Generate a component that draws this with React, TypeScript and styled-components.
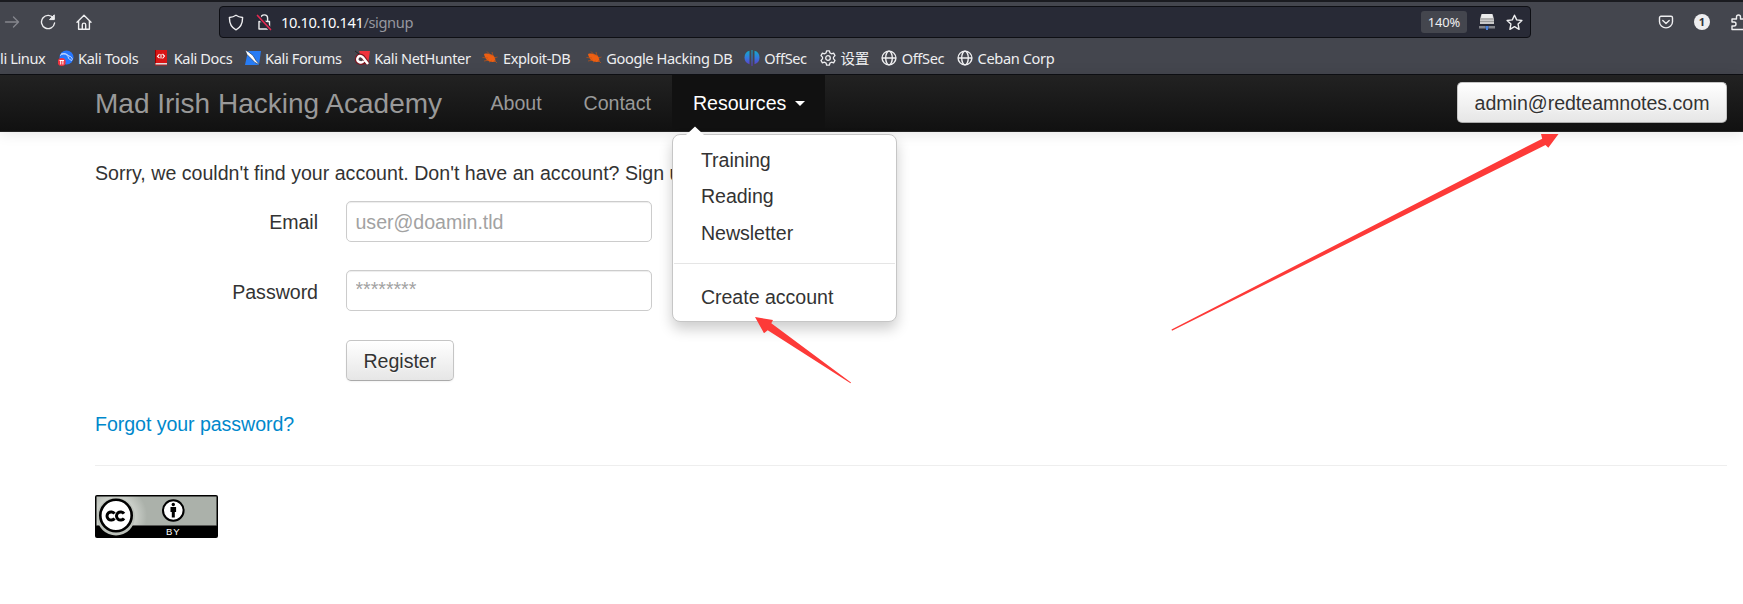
import React from 'react';
import styled, { createGlobalStyle } from 'styled-components';

const Global = createGlobalStyle`
  * { box-sizing: border-box; }
  body { margin: 0; background: #fff; overflow: hidden; font-family: "Liberation Sans", Arial, sans-serif; font-size: 19.6px; line-height: 28px; letter-spacing: -0.03px; color: #333; }
  a { text-decoration: none; color: inherit; }
  svg { display: block; flex: none; }
`;

const Window = styled.div`position: relative; width: 1743px; height: 604px; overflow: hidden;`;

const Chrome = styled.header`
  height: 75px; background: #44464e; border-top: 2px solid #1a1b20; border-bottom: 1px solid #0e0f13;
  font-family: "Noto Sans", "Noto Sans CJK SC", sans-serif; color: #eeeef0;
`;
const Toolbar = styled.div`display: flex; align-items: center; height: 40px; padding-left: 4px;`;
const NavIcons = styled.div`display: flex; flex: none; align-items: center; gap: 20px; width: 215px;`;
const UrlBar = styled.div`
  display: flex; flex: none; align-items: center; width: 1312px; height: 32px; padding: 0 7px 0 8px;
  background: #282a36; border: 1px solid #0e0f14; border-radius: 4px; font-size: 14.67px; letter-spacing: -0.4px;
`;
const UrlText = styled.span`flex: 1; margin-left: 9px; color: #fbfbfe; line-height: 20px; span { color: #96979f; }`;
const Zoom = styled.span`
  display: flex; align-items: center; justify-content: center; width: 46px; height: 22px; margin-right: 12px;
  background: #44464e; border-radius: 3px; font-size: 12.9px; letter-spacing: -0.1px;
`;
const ToolIcons = styled.div`display: flex; flex: none; align-items: center; gap: 20px; margin-left: 127px;`;
const Account = styled.span`
  display: flex; align-items: center; justify-content: center; width: 16px; height: 16px; border-radius: 50%;
  background: #eeeef0; color: #33353c; font-size: 11px; font-weight: 700; line-height: 16px;
`;
const Bookmarks = styled.nav`display: flex; align-items: center; height: 32px; gap: 12.6px; font-size: 14.6px; line-height: 20px; letter-spacing: -0.38px; white-space: nowrap;`;
const Bookmark = styled.a<{ $w: number }>`display: flex; flex: none; align-items: center; gap: 4.5px; width: ${p => p.$w}px; height: 20px;`;

const Navbar = styled.nav`
  display: flex; height: 57px; padding: 0 16px 0 95px; color: #999;
  background: linear-gradient(#222, #111); border-bottom: 1px solid #252525; box-shadow: 0 1px 14px rgba(0,0,0,.1);
`;
const Brand = styled.a`width: 374.5px; font-size: 28px; line-height: 57px; letter-spacing: 0; white-space: nowrap;`;
const NavItem = styled.div<{ $active?: boolean }>`
  position: relative; display: flex; align-items: center; padding: 0 21px; height: 56px;
  color: ${p => (p.$active ? '#fff' : '#999')}; background: ${p => (p.$active ? '#111' : 'transparent')};
`;
const Caret = styled.span`margin: 0 -1px 0 9px; border: 5.5px solid transparent; border-top-color: #fff; border-bottom: 0;`;
const Button = styled.button`
  height: 41px; padding: 0 16.5px; border: 1px solid #c5c5c5; border-bottom-color: #aaa; border-radius: 5px;
  font: inherit; letter-spacing: inherit; color: #333; text-shadow: 0 1px 1px rgba(255,255,255,.75);
  background: linear-gradient(#fff, #e6e6e6); box-shadow: inset 0 1px 0 rgba(255,255,255,.2), 0 1px 2px rgba(0,0,0,.05);
`;
const UserButton = styled(Button)`margin: 7px 0 0 auto; width: 270px;`;

const Dropdown = styled.div`
  position: absolute; z-index: 2; left: 0; top: 59px; width: 225px; height: 188px; padding: 7px 0;
  background: #fff; color: #333; border: 1px solid #c6c6c6; border-radius: 8px; box-shadow: 0 7px 14px rgba(0,0,0,.2);
`;
const Pointer = styled.svg`position: absolute; left: 13px; top: -9px;`;
const MenuItem = styled.a<{ $h?: number }>`display: block; height: ${p => p.$h ?? 36}px; padding: 4px 28px; line-height: 28px; white-space: nowrap;`;
const Divider = styled.div`height: 1px; margin: 12px 1px 15px; background: #e5e5e5;`;

const Content = styled.main`padding: 27px 16px 0 95px;`;
const Message = styled.p`margin: 0 0 14px; width: 720px; letter-spacing: 0; white-space: nowrap;`;
const Form = styled.form`display: flex; flex-direction: column; gap: 28px; margin-bottom: 29px;`;
const Row = styled.div<{ $h?: number }>`display: flex; align-items: flex-start; height: ${p => p.$h ?? 41}px;`;
const Label = styled.label<{ $top?: number }>`width: 223px; margin-right: 28px; padding-top: ${p => p.$top ?? 7}px; text-align: right;`;
const Input = styled.input<{ $top?: number; $bottom?: number }>`
  width: 306px; height: 41px; padding: ${p => p.$top ?? 0}px 9px ${p => p.$bottom ?? 0}px 8.5px; border: 1px solid #ccc; border-radius: 5px; background: #fff;
  font: inherit; letter-spacing: inherit; box-shadow: inset 0 1px 1px rgba(0,0,0,.075);
  &::placeholder { color: #a2a2a2; opacity: 1; }
`;
const Forgot = styled.a`display: block; color: #08c; letter-spacing: -0.06px;`;
const Rule = styled.hr`height: 1px; margin: 27px 0 29px; border: 0; background: #eee;`;
const Arrows = styled.svg`position: absolute; z-index: 3; inset: 0; pointer-events: none;`;

const line = { fill: 'none', stroke: '#eeeef0', strokeWidth: 1.4, strokeLinecap: 'round', strokeLinejoin: 'round' } as const;

const Forward = () => <svg width="16" height="16" viewBox="0 0 16 16" {...line} stroke="#85868d"><path d="M1.5 8h13M9.5 3l5 5-5 5" /></svg>;
const Reload = () => <svg width="16" height="16" viewBox="0 0 16 16" {...line}><path d="M13.6 4.4A6.6 6.6 0 1 0 14.6 9" /><path d="M14.3 1.2v4.4H9.9z" fill="#eeeef0" strokeWidth="1" /></svg>;
const Home = () => <svg width="16" height="16" viewBox="0 0 16 16" {...line}><path d="M1 8.2 8 1.3l7 6.9M2.6 7v8.2h10.8V7M6.3 15v-4.2a1.7 1.7 0 0 1 3.4 0V15" /></svg>;
const Shield = () => <svg width="16" height="17" viewBox="0 0 16 17" {...line}><path d="M8 1.2c2 1.4 4 2 6.6 2.3 0 5.5-1.7 10-6.6 12.3C3.1 13.5 1.4 9 1.4 3.5 4 3.2 6 2.6 8 1.2z" /></svg>;
const LockSvg = styled.svg`margin-left: 12px;`;
const Lock = () => <LockSvg width="16" height="18" viewBox="0 0 16 18" {...line}><path d="M3 8.5h10.5V16H3zM5 8V5.2a3.3 3.3 0 0 1 6.6 0V8" /><path d="m1.5 2.5 13 14" stroke="#282a36" strokeWidth="4" /><path d="m1.5 2.5 13 14" stroke="#e22850" strokeWidth="1.7" /></LockSvg>;
const Server = () => (
  <svg width="16" height="16" viewBox="0 0 16 16">
    <path d="M2.5 0h11L15 5v5H1V5z" fill="#c9c9c9" /><path d="M3 0h10l1 4H2z" fill="#ececec" /><path d="M1 5h14M1 7.5h14" stroke="#999" />
    <path d="M0 12h6.5v2.5H0zM9.5 12H16v2.5H9.5z" fill="#82848a" /><path d="M6.5 12h3v2.5H9V16H7v-1.5h-.5z" fill="#4c83db" />
  </svg>
);
const StarSvg = styled.svg`margin-left: 11px;`;
const Star = () => <StarSvg width="17" height="17" viewBox="0 0 17 17" {...line}><path d="m8.5 1.2 2.2 4.7 5.2.6-3.8 3.6 1 5.2-4.6-2.6-4.6 2.6 1-5.2L1.1 6.5l5.2-.6z" /></StarSvg>;
const Pocket = () => <svg width="16" height="16" viewBox="0 0 16 16" {...line}><path d="M3 2.2h10a1.5 1.5 0 0 1 1.5 1.5v4a6.5 6.2 0 0 1-13 0v-4A1.5 1.5 0 0 1 3 2.2zM4.8 6.4 8 9.4l3.2-3" /></svg>;
const Puzzle = () => <svg width="18" height="18" viewBox="0 0 18 18" {...line}><path d="M2 6h4.5V4a2 2 0 0 1 4 0v2H15v10.5H2V13h2a2 2 0 0 0 0-4H2z" /></svg>;

const ToolsIcon = () => <svg width="16" height="16" viewBox="0 0 16 16"><circle cx="8.5" cy="7.5" r="7" fill="#2777ff" /><path d="M2 5.5c4-3 7-1.5 9 .5 2 .5 3 1.5 3.5 3.5M3 4c4-1 6 .5 7 2.5.5 3 2 3 4 4" fill="none" stroke="#c8ddff" strokeWidth="1" /><circle cx="3.7" cy="12" r="4" fill="#ef3340" /><path d="M1.5 10.5h4.5M2.7 10.5v4M4.9 10.5v4" stroke="#fff" /></svg>;
const DocsIcon = () => <svg width="16" height="16" viewBox="0 0 16 16"><path d="M2 0h12v13H2z" fill="#d91515" /><path d="M2 0h1v15H2z" fill="#900" /><path d="M2.5 13H14v2H2.5z" fill="#ddd" /><path d="M2 15h12" stroke="#b22" /><path d="m6.5 4-2 2.5 2 1.5M9.5 4l2 2-2 2.5M8 4v4.5" fill="none" stroke="#fff" strokeWidth="1.1" /></svg>;
const ForumsIcon = () => <svg width="16" height="16" viewBox="0 0 16 16"><path d="M3 1h13l-2 14H0z" fill="#277cf5" /><path d="M0 0l3 1.5 5 4 3 5 4 4.5-5-2.5-4-4-4-4z" fill="#fff" stroke="#182b48" strokeWidth=".6" /></svg>;
const HunterIcon = () => <svg width="16" height="16" viewBox="0 0 16 16"><path d="M5 1h11l-2 13-6-5z" fill="#f0323c" /><path d="m1 1 4 3" stroke="#222" /><path d="M14 14 10.5 9C9 6 6 4.5 4 6.5s-1.500 5 1 6 4.500 0 5-1" fill="none" stroke="#7c1620" strokeWidth="4" /><path d="M14 14 10.5 9.5C9 6.5 6 5 4.3 6.8s-1.300 4.400.9 5.200 3.800 0 4.300-1" fill="none" stroke="#fff" strokeWidth="2.5" /></svg>;
const BugIcon = () => <svg width="16" height="16" viewBox="0 0 16 16"><path d="M2 4c3-1 8-.5 11 3.5l.5 4-3 .5C6 12 3 9 2 4z" fill="#ed5f13" /><path d="M.5 7.5 6 8M2 11l5-1M5 1.500l4 4M10 2l1 4M12 8l3.500-1M12 10l3 3M7 12l3-1" stroke="#c65312" strokeWidth=".7" /></svg>;
const OffSecIcon = () => (
  <svg width="16" height="16" viewBox="0 0 16 16"><defs><linearGradient id="os" gradientUnits="userSpaceOnUse" x1="0" y1="0" x2="0" y2="16"><stop stopColor="#10afc8" /><stop offset=".5" stopColor="#3478dd" /><stop offset="1" stopColor="#6733c4" /></linearGradient></defs>
    <path d="M5.5.8v13.4C2.5 13.500.5 11 .5 7.500S2.500 1.500 5.500.8zM7.500 0h1v16h-1zM10.500.8c3 .7 5 3.200 5 6.700s-2 6-5 6.700z" fill="url(#os)" /></svg>
);
const Gear = () => <svg width="16" height="16" viewBox="0 0 16 16" {...line} strokeWidth="1.3"><path d="M6.6.8h2.800l.5 2.100 1.600.9 2.100-.6L15 5.600l-1.500 1.500v1.800l1.500 1.500-1.400 2.400-2.100-.6-1.600.9-.5 2.100H6.600l-.5-2.100-1.600-.9-2.100.6L1 10.400l1.500-1.500V7.100L1 5.600l1.400-2.400 2.100.6 1.600-.9z" /><circle cx="8" cy="8" r="2.3" /></svg>;
const Globe = () => <svg width="16" height="16" viewBox="0 0 16 16" {...line}><circle cx="8" cy="8" r="6.9" /><ellipse cx="8" cy="8" rx="3.3" ry="6.9" /><path d="M1.5 8h13" /></svg>;

const BOOKMARKS: { label: string; w: number; icon?: React.ReactNode }[] = [
  { label: 'li Linux', w: 45 },
  { label: 'Kali Tools', w: 83, icon: <ToolsIcon /> },
  { label: 'Kali Docs', w: 78.8, icon: <DocsIcon /> },
  { label: 'Kali Forums', w: 96.7, icon: <ForumsIcon /> },
  { label: 'Kali NetHunter', w: 116, icon: <HunterIcon /> },
  { label: 'Exploit-DB', w: 90.7, icon: <BugIcon /> },
  { label: 'Google Hacking DB', w: 145.5, icon: <BugIcon /> },
  { label: 'OffSec', w: 63.5, icon: <OffSecIcon /> },
  { label: '设置', w: 48.7, icon: <Gear /> },
  { label: 'OffSec', w: 63.3, icon: <Globe /> },
  { label: 'Ceban Corp', w: 100, icon: <Globe /> },
];

const License = () => (
  <svg width="123" height="43" viewBox="0 0 123 43">
    <defs><radialGradient id="glow" gradientUnits="userSpaceOnUse" cx="21" cy="21" r="31"><stop offset=".5" stopColor="#d4d8d2" /><stop offset="1" stopColor="#abb1aa" /></radialGradient></defs>
    <rect width="123" height="43" rx="2" fill="#000" /><path d="M1.5 1.5h120v29h-120z" fill="url(#glow)" />
    <path d="M1.5 30.5h120" stroke="#555" strokeWidth=".7" />
    <circle cx="21" cy="21.5" r="19" fill="#bcc1ba" /><circle cx="21" cy="20.5" r="15.7" fill="#fff" stroke="#000" strokeWidth="2.6" />
    <path d="M19.500 18.700a4.100 4.100 0 1 0 0 4.600M29 18.700a4.100 4.100 0 1 0 0 4.600" fill="none" stroke="#000" strokeWidth="3" />
    <circle cx="78.3" cy="15.5" r="10.3" fill="#fff" stroke="#000" strokeWidth="2" />
    <circle cx="78.3" cy="9.5" r="1.7" /><path d="M75.5 12h5.600v5h-1.300v5.500h-3V17h-1.300z" />
    <text x="78.3" y="40" textAnchor="middle" fill="#fff" fontFamily="Liberation Sans, Arial, sans-serif" fontSize="9.5" letterSpacing="1">BY</text>
  </svg>
);

export default function App() {
  return (
    <Window>
      <Global />
      <Chrome>
        <Toolbar>
          <NavIcons><Forward /><Reload /><Home /></NavIcons>
          <UrlBar>
            <Shield /><Lock />
            <UrlText>10.10.10.141<span>/signup</span></UrlText>
            <Zoom>140%</Zoom><Server /><Star />
          </UrlBar>
          <ToolIcons><Pocket /><Account>1</Account><Puzzle /></ToolIcons>
        </Toolbar>
        <Bookmarks>
          {BOOKMARKS.map((b, i) => <Bookmark key={i} $w={b.w}>{b.icon}{b.label}</Bookmark>)}
        </Bookmarks>
      </Chrome>
      <Navbar>
        <Brand>Mad Irish Hacking Academy</Brand>
        <NavItem>About</NavItem>
        <NavItem>Contact</NavItem>
        <NavItem $active>
          Resources<Caret />
          <Dropdown>
            <Pointer width="18" height="10" viewBox="0 0 18 10"><path d="M0 9 9 .5 18 9v1H0z" fill="#fff" /></Pointer>
            <MenuItem>Training</MenuItem>
            <MenuItem $h={37}>Reading</MenuItem>
            <MenuItem>Newsletter</MenuItem>
            <Divider />
            <MenuItem>Create account</MenuItem>
          </Dropdown>
        </NavItem>
        <UserButton>admin@redteamnotes.com</UserButton>
      </Navbar>
      <Content>
        <Message>Sorry, we couldn't find your account. Don't have an account? Sign up</Message>
        <Form>
          <Row><Label>Email</Label><Input $top={2} placeholder="user@doamin.tld" /></Row>
          <Row $h={42}><Label $top={8}>Password</Label><Input $bottom={2} type="text" placeholder="********" /></Row>
          <Row><Label /><Button type="button">Register</Button></Row>
        </Form>
        <Forgot>Forgot your password?</Forgot>
        <Rule />
        <License />
      </Content>
      <Arrows width="1743" height="604" fill="#fd3a38">
        <path d="M755 317 773 320 771.3 323.3 851 382.5 850.5 383.3 767.7 330.3 764 333.3z" />
        <path d="M1558.5 134H1541l1.200 4.700L1171.500 329.500l.5 1.300L1545.500 145l2.800 2.800z" />
      </Arrows>
    </Window>
  );
}
